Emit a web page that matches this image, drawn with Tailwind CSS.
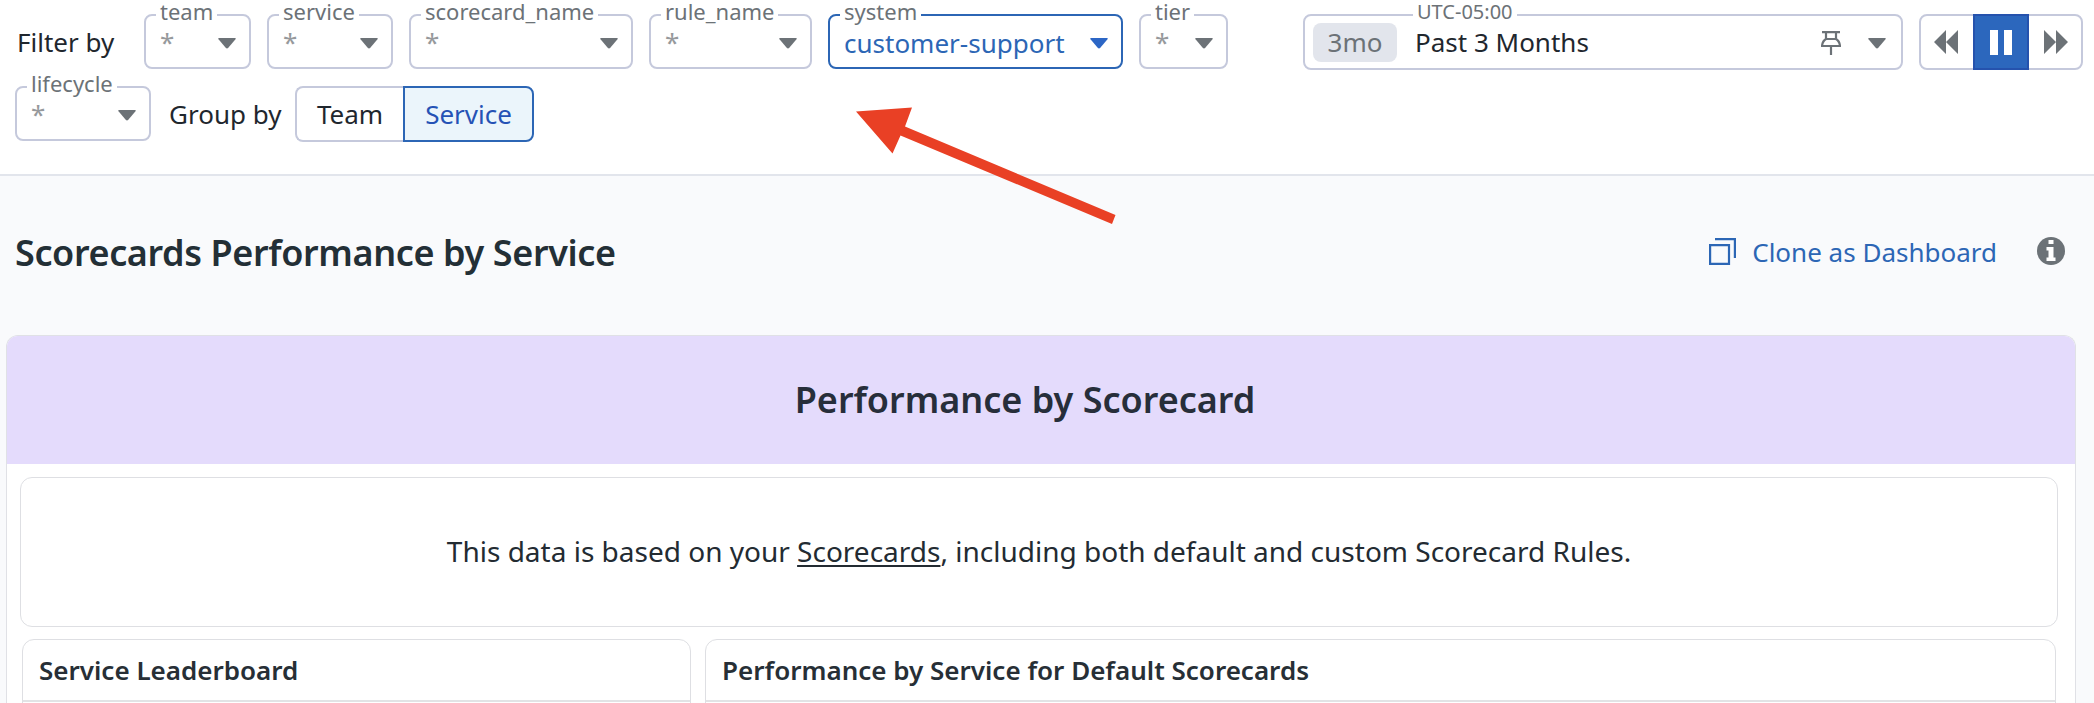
<!DOCTYPE html>
<html lang="en"><head><meta charset="utf-8"><title>Scorecards Performance by Service</title>
<script src="https://cdn.jsdelivr.net/npm/@tailwindcss/browser@4"></script></head>
<body class="w-[2094px] h-[703px] overflow-hidden relative bg-[#f9fafc] text-[#1f272e] font-['Noto_Sans',sans-serif] text-[26px] leading-9">
<header class="h-[176px] bg-white border-b-2 border-[#e2e5ec] pt-[14px] pl-[15px] pr-[11px]">
  <div class="flex items-center h-[56px]">
    <span class="w-[129px] pl-[2px]">Filter by</span>
    <div class="flex gap-4 h-[56px]">
      <div class="relative w-[107px] h-[55px] border-2 border-[#c5c9dc] rounded-lg flex items-center justify-between pl-[14px] pr-[13px] text-[#96999c]"><span class="absolute -top-[20px] left-[10px] px-1 bg-white text-[22px] leading-[30px] text-[#6c7277]">team</span><span>*</span><svg class="mt-[3px] w-[18px] h-[11px] fill-[#6c7277]" viewBox="0 0 18 11"><path d="M1 0H17Q18.500 0 17.500 1.300L10.300 9.800Q9 11 7.700 9.800L.5 1.300Q-.5 0 1 0Z"/></svg></div>
      <div class="relative w-[126px] h-[55px] border-2 border-[#c5c9dc] rounded-lg flex items-center justify-between pl-[14px] pr-[13px] text-[#96999c]"><span class="absolute -top-[20px] left-[10px] px-1 bg-white text-[22px] leading-[30px] text-[#6c7277]">service</span><span>*</span><svg class="mt-[3px] w-[18px] h-[11px] fill-[#6c7277]" viewBox="0 0 18 11"><path d="M1 0H17Q18.500 0 17.500 1.300L10.300 9.800Q9 11 7.700 9.800L.5 1.300Q-.5 0 1 0Z"/></svg></div>
      <div class="relative w-[224px] h-[55px] border-2 border-[#c5c9dc] rounded-lg flex items-center justify-between pl-[14px] pr-[13px] text-[#96999c]"><span class="absolute -top-[20px] left-[10px] px-1 bg-white text-[22px] leading-[30px] text-[#6c7277]">scorecard_name</span><span>*</span><svg class="mt-[3px] w-[18px] h-[11px] fill-[#6c7277]" viewBox="0 0 18 11"><path d="M1 0H17Q18.500 0 17.500 1.300L10.300 9.800Q9 11 7.700 9.800L.5 1.300Q-.5 0 1 0Z"/></svg></div>
      <div class="relative w-[163px] h-[55px] border-2 border-[#c5c9dc] rounded-lg flex items-center justify-between pl-[14px] pr-[13px] text-[#96999c]"><span class="absolute -top-[20px] left-[10px] px-1 bg-white text-[22px] leading-[30px] text-[#6c7277]">rule_name</span><span>*</span><svg class="mt-[3px] w-[18px] h-[11px] fill-[#6c7277]" viewBox="0 0 18 11"><path d="M1 0H17Q18.500 0 17.500 1.300L10.300 9.800Q9 11 7.700 9.800L.5 1.300Q-.5 0 1 0Z"/></svg></div>
      <div class="relative w-[295px] h-[55px] border-2 border-[#2c66b5] rounded-lg flex items-center justify-between pl-[14px] pr-[13px] text-[#2c66b5]"><span class="absolute -top-[20px] left-[10px] px-1 bg-white text-[22px] leading-[30px] text-[#6c7277]">system</span><span class="pt-[2px]">customer-support</span><svg class="mt-[3px] w-[18px] h-[11px] fill-[#2c66c5]" viewBox="0 0 18 11"><path d="M1 0H17Q18.500 0 17.500 1.300L10.300 9.800Q9 11 7.700 9.800L.5 1.300Q-.5 0 1 0Z"/></svg></div>
      <div class="relative w-[89px] h-[55px] border-2 border-[#c5c9dc] rounded-lg flex items-center justify-between pl-[14px] pr-[13px] text-[#96999c]"><span class="absolute -top-[20px] left-[10px] px-1 bg-white text-[22px] leading-[30px] text-[#6c7277]">tier</span><span>*</span><svg class="mt-[3px] w-[18px] h-[11px] fill-[#6c7277]" viewBox="0 0 18 11"><path d="M1 0H17Q18.500 0 17.500 1.300L10.300 9.800Q9 11 7.700 9.800L.5 1.300Q-.5 0 1 0Z"/></svg></div>
    </div>
    <div class="ml-auto relative w-[600px] h-[56px] border-2 border-[#c5c9dc] rounded-lg flex items-center pl-2 pr-[15px]">
      <span class="absolute -top-[19px] left-[108px] px-1 bg-white text-[20px] leading-[30px] text-[#6c7277]">UTC-05:00</span>
      <span class="w-[84px] h-[39px] rounded-lg bg-[#e2e5ec] text-[#6c7277] text-center leading-[38px]">3mo</span><span class="ml-[18px]">Past 3 Months</span>
      <svg class="ml-auto mt-[2px] w-[20px] h-[24px]" viewBox="0 0 20 24" fill="none" stroke="#6c7277" stroke-width="2.200"><path d="M1 1.200H19M5 1V8M15 1V8M5 8H15Q18.500 10 19 15H1Q1.500 10 5 8ZM10 15V24"/></svg>
      <svg class="ml-[27px] mt-[3px] w-[18px] h-[11px] fill-[#6c7277]" viewBox="0 0 18 11"><path d="M1 0H17Q18.500 0 17.500 1.300L10.300 9.800Q9 11 7.700 9.800L.5 1.300Q-.5 0 1 0Z"/></svg>
    </div>
    <div class="ml-4 w-[164px] h-[56px] border-2 border-[#c5c9dc] rounded-lg flex items-center">
      <svg class="ml-[13px] w-6 h-6 fill-[#6c7277]" viewBox="0 0 24 24"><path d="M12 0V24L0 12ZM24 0V24L12 12Z"/></svg>
      <div class="ml-[15px] w-[56px] h-[56px] shrink-0 bg-[#2c67bd] border-2 border-[#2552ad] flex items-center justify-center gap-[6px]"><i class="w-2 h-[25px] bg-white"></i><i class="w-2 h-[25px] bg-white"></i></div>
      <svg class="ml-[15px] w-6 h-6 fill-[#6c7277]" viewBox="0 0 24 24"><path d="M0 0V24L12 12ZM12 0V24L24 12Z"/></svg>
    </div>
  </div>
  <div class="flex items-center h-[56px] mt-4">
    <div class="self-start relative w-[136px] h-[55px] border-2 border-[#c5c9dc] rounded-lg flex items-center justify-between pl-[14px] pr-[13px] text-[#96999c]"><span class="absolute -top-[20px] left-[10px] px-1 bg-white text-[22px] leading-[30px] text-[#6c7277]">lifecycle</span><span class="leading-5">*</span><svg class="mt-[3px] w-[18px] h-[11px] fill-[#6c7277]" viewBox="0 0 18 11"><path d="M1 0H17Q18.500 0 17.500 1.300L10.300 9.800Q9 11 7.700 9.800L.5 1.300Q-.5 0 1 0Z"/></svg></div>
    <span class="ml-[18px] w-[126px] whitespace-nowrap">Group by</span>
    <div class="flex h-[56px]"><span class="w-[108px] h-[56px] border-2 border-r-0 border-[#c5c9dc] rounded-l-lg flex items-center justify-center">Team</span><span class="w-[131px] h-[56px] border-2 border-[#2c66b5] rounded-r-lg bg-[#ebf5fb] text-[#2552b5] flex items-center justify-center">Service</span></div>
  </div>
</header>
<svg class="absolute left-[850px] top-[100px] w-[270px] h-[130px] fill-[#e94025]" viewBox="850 100 270 130"><path d="M856 111.500L912 107.500L905 126.500L1115.500 215L1112 224L900.500 135.500L892.500 153.500Z"/></svg>
<div class="flex items-center h-[159px] px-[15px] pb-[7px]">
  <h1 class="text-[36px] leading-[48px] pt-px font-semibold whitespace-nowrap tracking-[-0.38px] text-[#232f36]">Scorecards Performance by Service</h1>
  <svg class="ml-auto w-[27px] h-[27px] mb-px" viewBox="0 0 27 27" fill="none" stroke="#2c66b5" stroke-width="2.200"><path d="M1.100 7.100H20V25.900H1.100ZM6 1.100H25.900V20"/></svg>
  <span class="ml-4 text-[#2c66b5]">Clone as Dashboard</span>
  <svg class="ml-[40px] mr-[14px] mb-[3px] w-7 h-7" viewBox="0 0 28 28"><circle cx="14" cy="14" r="14" fill="#6c7277"/><path fill="#fff" d="M11.500 3H16.500V7H11.500ZM9.500 10H16.500V20.500H18.500V24H9.500V20.500H11.500V13.500H9.500Z"/></svg>
</div>
<main class="ml-[6px] w-[2070px] h-[380px] border border-b-0 border-[#e0e1e6] rounded-t-xl bg-white overflow-hidden">
  <h2 class="h-[128px] bg-[#e4dbfc] text-center text-[36px] leading-[128px] font-semibold text-[#272e3a] pr-[32px]">Performance by Scorecard</h2>
  <p class="mt-[13px] ml-[13px] w-[2038px] h-[150px] border border-[#dedfe3] rounded-xl text-center text-[28px] leading-[147px] text-[#232b32]">This data is based on your <span class="underline decoration-2 underline-offset-[3px]">Scorecards</span>, including both default and custom Scorecard Rules.</p>
  <div class="mt-3 ml-[15px] flex gap-[14px] text-[26px] font-semibold text-[#272f36]">
    <section class="w-[669px] h-20 border border-[#dedfe3] rounded-t-xl"><h3 class="h-[62px] border-b-2 border-[#e2e3e5] pl-[16px] leading-[61px]">Service Leaderboard</h3></section>
    <section class="w-[1351px] h-20 border border-[#dedfe3] rounded-t-xl"><h3 class="h-[62px] border-b-2 border-[#e2e3e5] pl-[16px] leading-[61px]">Performance by Service for Default Scorecards</h3></section>
  </div>
</main>
</body></html>
